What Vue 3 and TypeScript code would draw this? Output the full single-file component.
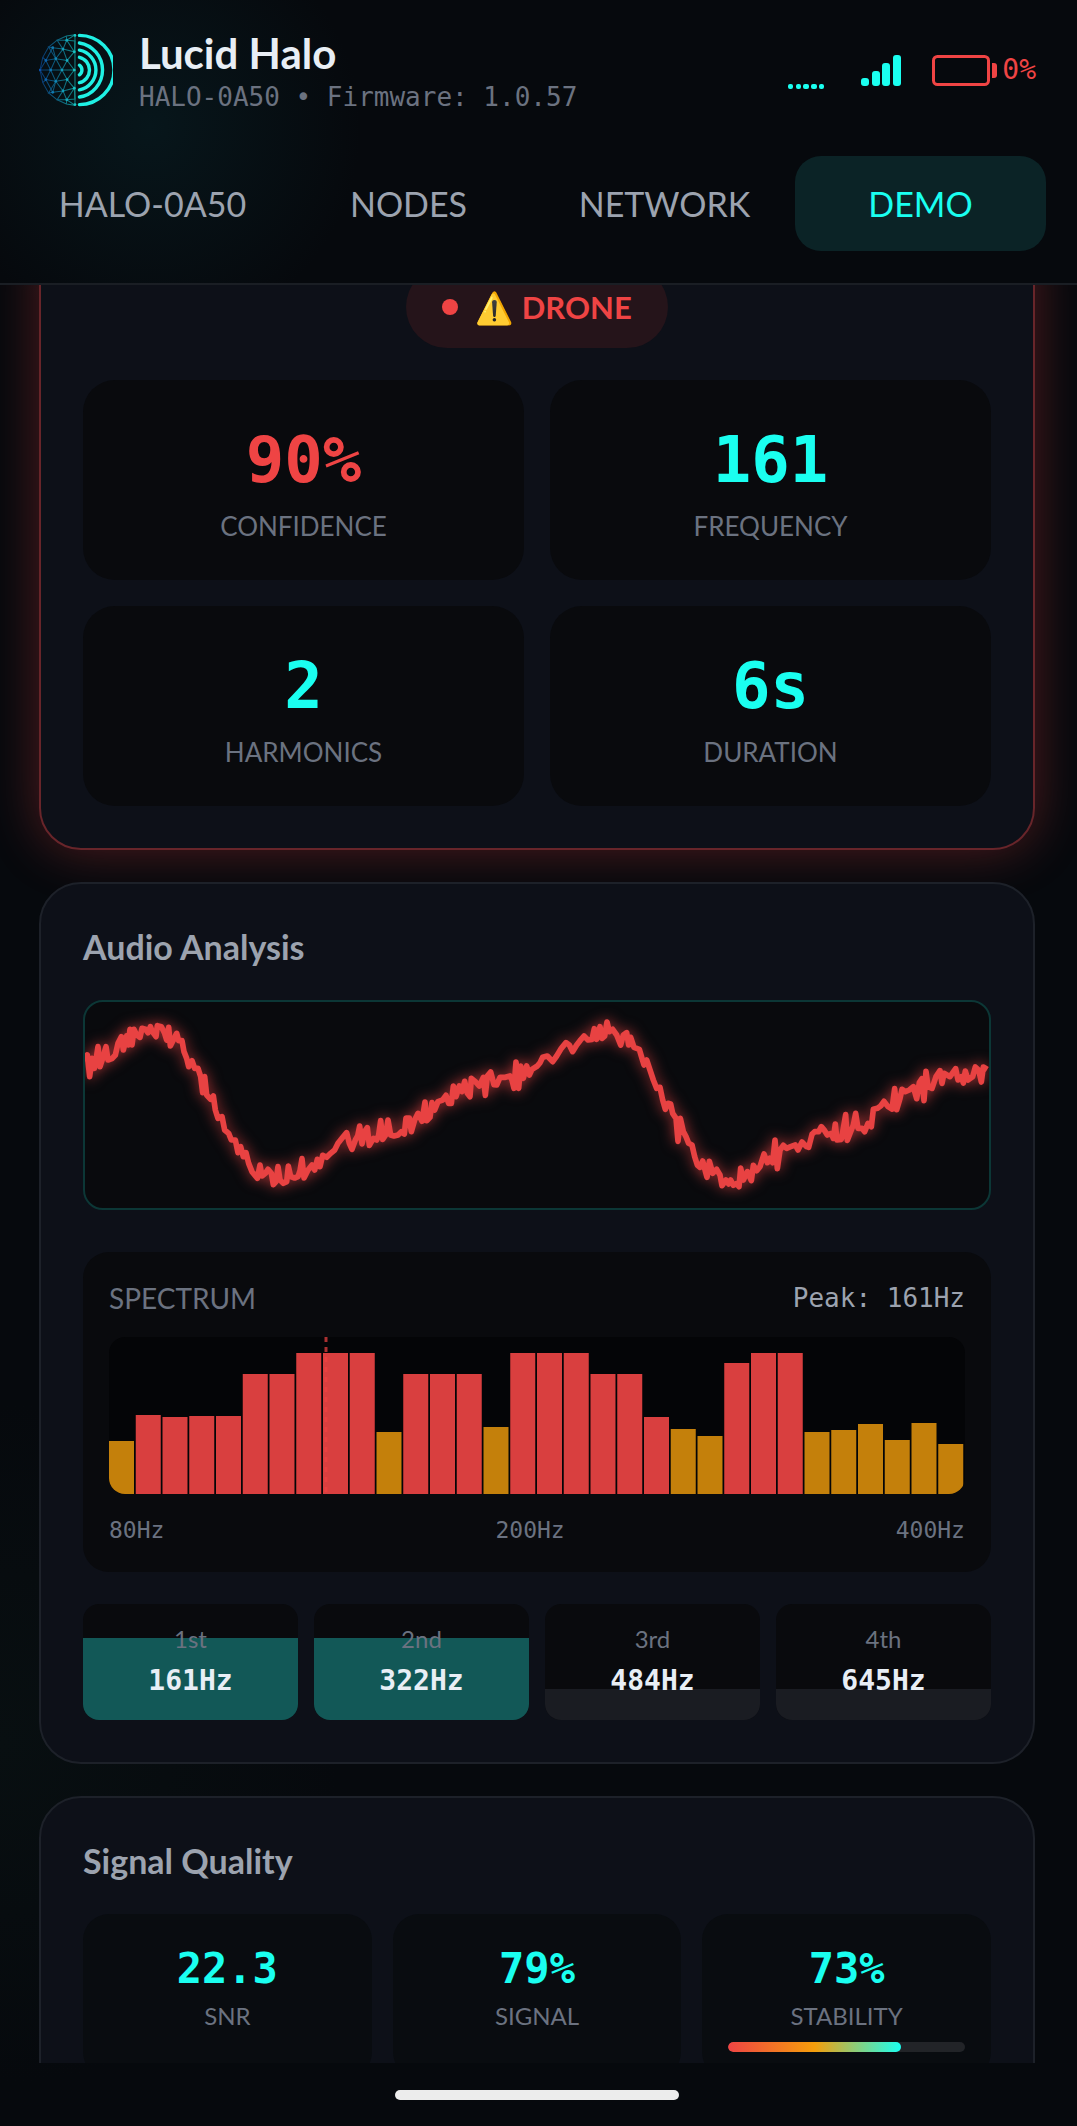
<script setup lang="ts">
interface Stat {
  value: string
  label: string
  alert?: boolean
  level?: number
}

interface Harmonic {
  order: string
  frequency: string
  level: number
  active: boolean
}

const tabs: string[] = ['HALO-0A50', 'NODES', 'NETWORK', 'DEMO']
const activeTab = 'DEMO'

const detection: Stat[] = [
  { value: '90%', label: 'CONFIDENCE', alert: true },
  { value: '161', label: 'FREQUENCY' },
  { value: '2', label: 'HARMONICS' },
  { value: '6s', label: 'DURATION' },
]

const harmonics: Harmonic[] = [
  { order: '1st', frequency: '161Hz', level: 71, active: true },
  { order: '2nd', frequency: '322Hz', level: 71, active: true },
  { order: '3rd', frequency: '484Hz', level: 27, active: false },
  { order: '4th', frequency: '645Hz', level: 27, active: false },
]

const quality: Stat[] = [
  { value: '22.3', label: 'SNR' },
  { value: '79%', label: 'SIGNAL' },
  { value: '73%', label: 'STABILITY', level: 73 },
]

// Spectrum magnitudes, one per band between 80 and 400 Hz, out of 157
const bands: number[] = [
  53, 79, 77, 78, 78, 120, 120, 141, 141, 141, 62, 120, 120, 120, 67, 141,
  141, 141, 120, 120, 77, 65, 58, 131, 141, 141, 62, 64, 70, 54, 71, 50,
]
const bandPitch = 26.75
const bandColor = (magnitude: number): string => (magnitude > 75 ? '#d93f3f' : '#c4800b')

// Waveform samples as x,y pairs; the second sweep continues where the first ends
const sweepOffset = 1440
const firstSweep: number[] = [
  75, 245, 82, 225, 89, 290, 96, 235, 103, 265, 108, 240, 114, 200, 120, 260, 128, 235, 138, 200,
  144, 240, 156, 236, 166, 225, 174, 190, 184, 170, 190, 210, 200, 168, 205, 195, 210, 148, 216, 195,
  222, 148, 230, 165, 240, 172, 246, 145, 256, 148, 264, 158, 271, 140, 277, 155, 288, 170, 292, 137,
  304, 140, 314, 160, 320, 180, 326, 142, 331, 198, 340, 180, 350, 160, 356, 182, 366, 182, 372, 215,
  380, 235, 386, 260, 396, 242, 404, 265, 414, 265, 422, 290, 428, 338, 434, 290, 440, 345, 452, 358,
  460, 348, 466, 390, 474, 415, 486, 410, 494, 450, 506, 460, 514, 480, 526, 480, 534, 518, 542, 500,
  550, 530, 558, 518, 566, 550, 576, 575, 592, 595, 600, 555, 606, 588, 616, 580, 624, 568, 634, 580,
  640, 614, 648, 605, 654, 560, 660, 600, 670, 610, 680, 605, 685, 558, 692, 590, 704, 594, 714, 590,
  720, 572, 726, 536, 732, 594, 744, 570, 756, 555, 764, 570, 772, 538, 780, 560, 788, 526, 800, 532,
  812, 520, 824, 510, 834, 490, 846, 475, 860, 458, 868, 490, 876, 508, 886, 480, 893, 468, 899, 438,
  906, 492, 914, 455, 922, 443, 928, 496, 940, 475, 950, 480, 956, 465, 962, 422, 968, 478, 977, 465,
  984, 420, 992, 465, 1002, 468, 1014, 465, 1024, 455, 1033, 462, 1038, 414, 1048, 414, 1054, 455,
  1064, 420, 1074, 400, 1086, 424, 1095, 366, 1100, 422, 1110, 412, 1116, 368, 1124, 390, 1134, 365,
  1148, 360, 1158, 346, 1166, 370, 1174, 370, 1180, 318, 1188, 350, 1198, 318, 1206, 335, 1214, 304,
  1222, 340, 1230, 350, 1234, 295, 1246, 305, 1258, 318, 1270, 292, 1276, 346, 1282, 288, 1292, 276,
  1302, 314, 1310, 315, 1320, 292, 1336, 292, 1350, 288, 1356, 300, 1362, 325, 1368, 246, 1376, 325,
  1382, 258, 1390, 295, 1400, 258, 1408, 285, 1416, 268, 1432, 258,
]
const secondSweep: number[] = [
  0, 248, 8, 232, 22, 228, 38, 245, 50, 228, 64, 205, 78, 188, 88, 195, 98, 215, 110, 195, 120, 182,
  132, 168, 144, 180, 156, 178, 163, 146, 170, 178, 180, 140, 186, 175, 194, 168, 201, 126, 208, 155,
  218, 148, 230, 165, 242, 195, 250, 165, 260, 158, 266, 195, 272, 172, 282, 202, 298, 208, 306, 235,
  312, 255, 320, 240, 330, 270, 340, 300, 350, 325, 360, 322, 368, 360, 376, 388, 384, 370, 392, 372,
  398, 400, 408, 415, 414, 484, 421, 415, 430, 455, 438, 470, 446, 490, 456, 495, 464, 530, 472, 555,
  480, 562, 488, 543, 501, 592, 508, 544, 518, 580, 530, 568, 540, 585, 546, 617, 558, 600, 566, 612,
  572, 600, 580, 616, 590, 610, 597, 620, 602, 564, 610, 600, 622, 575, 634, 602, 640, 556, 650, 572,
  660, 560, 672, 522, 682, 548, 690, 535, 698, 548, 705, 480, 712, 566, 720, 510, 730, 496, 740, 505,
  752, 500, 766, 495, 774, 510, 786, 486, 800, 500, 806, 502, 816, 463, 824, 455, 836, 455, 844, 440,
  854, 452, 862, 465, 874, 460, 880, 475, 886, 432, 891, 480, 904, 478, 910, 445, 917, 404, 922, 481,
  934, 450, 940, 435, 947, 400, 954, 445, 966, 445, 974, 455, 984, 430, 994, 440, 1000, 388, 1012, 385,
  1022, 378, 1032, 364, 1044, 380, 1056, 387, 1064, 326, 1070, 389, 1080, 355, 1086, 328, 1096, 335,
  1108, 330, 1120, 320, 1130, 356, 1138, 308, 1146, 296, 1152, 362, 1158, 274, 1164, 320, 1176, 325,
  1188, 290, 1200, 272, 1206, 310, 1212, 280, 1230, 290, 1247, 266, 1254, 300, 1264, 290, 1270, 309,
  1276, 273, 1284, 300, 1298, 290, 1306, 261, 1316, 270, 1324, 306, 1330, 261, 1342, 268,
]
const waveform: string = [
  ...firstSweep,
  ...secondSweep.map((n, i) => (i % 2 === 0 ? n + sweepOffset : n)),
].join(' ')

const meshLines: string[] = [
  '102,2 77,6 50,18 25,38 8,68 0,105 8,142 25,172 50,192 77,204 102,208 102,2',
  '102,2 78,18 50,18 67,44 78,18 100,52 67,44 37,40 25,38 46,72 67,44 79,77 100,52',
  '77,6 78,18 102,20 100,52',
  '37,40 17,77 46,72 79,77 100,105 64,105 79,77',
  '8,68 17,77 0,105 31,105 17,77',
  '37,40 46,72 31,105 64,105 46,72',
  '102,208 78,192 50,192 67,166 78,192 100,158 67,166 37,170 25,172 46,138 67,166 79,133 100,158',
  '77,204 78,192 102,190 100,158',
  '37,170 17,133 46,138 79,133 100,105',
  '8,142 17,133 0,105',
  '31,105 17,133',
  '37,170 46,138 31,105',
  '64,105 46,138',
  '64,105 79,133',
]
const meshNodes: [number, number][] = [
  [102, 4], [78, 18], [67, 44], [37, 40], [100, 52], [46, 72], [79, 77], [17, 77], [31, 105],
  [64, 105], [100, 105], [0, 105], [79, 133], [46, 138], [17, 133], [100, 158], [67, 166],
  [37, 170], [78, 192], [102, 206],
]
const ringRadii: number[] = [101, 80, 59, 38, 17]
const ringPath = (r: number): string => {
  const rise = Math.round(Math.sqrt(r * r - 100))
  return `M115 ${105 - rise}A${r} ${r} 0 0 1 115 ${105 + rise}`
}
</script>

<template>
  <div class="app">
    <header class="header">
      <div class="brand-row">
        <svg class="logo" viewBox="-3 -3 216 216" aria-hidden="true">
          <defs>
            <linearGradient id="mesh" gradientUnits="userSpaceOnUse" x1="0" y1="0" x2="104" y2="0">
              <stop offset="0" stop-color="#0b4fa8" />
              <stop offset="1" stop-color="#17c9c4" />
            </linearGradient>
          </defs>
          <g fill="none" stroke="url(#mesh)" stroke-width="3" opacity="0.65">
            <polyline v-for="(line, i) in meshLines" :key="i" :points="line" />
          </g>
          <circle v-for="([x, y], i) in meshNodes" :key="i" :cx="x" :cy="y" r="4" fill="url(#mesh)" />
          <path
            v-for="r in ringRadii"
            :key="r"
            :d="ringPath(r)"
            fill="none"
            stroke="#1ff0e4"
            stroke-width="10"
            stroke-linecap="round"
          />
        </svg>
        <div class="brand">
          <h1>Lucid Halo</h1>
          <p class="mono">HALO-0A50 • Firmware: 1.0.57</p>
        </div>
        <div class="status">
          <svg class="activity" width="36" height="38" viewBox="0 0 36 38" fill="#1afff0" aria-label="Activity">
            <rect x="0" y="33" width="5" height="5" rx="2" />
            <rect x="8" y="33" width="5" height="5" rx="2" />
            <rect x="15" y="33" width="6" height="5" rx="2" />
            <rect x="23" y="33" width="6" height="5" rx="2" />
            <rect x="31" y="33" width="5" height="5" rx="2" />
          </svg>
          <svg width="40" height="31" viewBox="0 0 40 31" fill="#1afff0" aria-label="Signal strength">
            <rect x="0" y="23" width="8" height="8" rx="3" />
            <rect x="11" y="16" width="8" height="15" rx="3" />
            <rect x="21" y="8" width="8" height="23" rx="3" />
            <rect x="32" y="0" width="8" height="31" rx="3" />
          </svg>
          <div class="battery">
            <svg width="65" height="31" viewBox="0 0 65 31" aria-hidden="true">
              <rect x="1.5" y="1.5" width="55" height="28" rx="4" fill="none" stroke="#ef4444" stroke-width="3" />
              <path d="M60 8h2a3 3 0 0 1 3 3v9a3 3 0 0 1-3 3h-2z" fill="#ef4444" />
            </svg>
            <span class="mono">0%</span>
          </div>
        </div>
      </div>
      <nav class="tabs">
        <button v-for="tab in tabs" :key="tab" type="button" :class="{ active: tab === activeTab }">
          {{ tab }}
        </button>
      </nav>
    </header>

    <main class="content">
      <section class="card alert-card">
        <div class="badge">
          <span class="dot"></span>
          <span class="badge-text"><span class="emoji">⚠️</span> DRONE</span>
        </div>
        <div class="detection">
          <div v-for="stat in detection" :key="stat.label" class="tile">
            <div class="tile-value mono" :class="{ alert: stat.alert }">{{ stat.value }}</div>
            <div class="tile-label">{{ stat.label }}</div>
          </div>
        </div>
      </section>

      <section class="card">
        <h2>Audio Analysis</h2>
        <div class="wave">
          <svg viewBox="75 66 2712 618" preserveAspectRatio="none" role="img" aria-label="Waveform">
            <polyline
              :points="waveform"
              fill="none"
              stroke="#e84242"
              stroke-width="17"
              stroke-linejoin="round"
            />
          </svg>
        </div>
        <div class="spectrum">
          <div class="spectrum-head">
            <span class="spectrum-title">SPECTRUM</span>
            <span class="peak mono">Peak: 161Hz</span>
          </div>
          <svg class="bands" viewBox="0 0 856 157" preserveAspectRatio="none" role="img" aria-label="Spectrum">
            <rect
              v-for="(magnitude, i) in bands"
              :key="i"
              :x="i * bandPitch"
              :y="157 - magnitude"
              width="25"
              :height="magnitude"
              :fill="bandColor(magnitude)"
            />
            <line x1="217" y1="0" x2="217" y2="157" stroke="#ef4444" stroke-width="3" stroke-dasharray="5 5" opacity="0.7" />
          </svg>
          <div class="axis mono">
            <span>80Hz</span>
            <span>200Hz</span>
            <span>400Hz</span>
          </div>
        </div>
        <div class="harmonics">
          <div v-for="h in harmonics" :key="h.order" class="harmonic">
            <div class="fill" :class="{ active: h.active }" :style="{ height: h.level + '%' }"></div>
            <div class="order">{{ h.order }}</div>
            <div class="freq mono">{{ h.frequency }}</div>
          </div>
        </div>
      </section>

      <section class="card">
        <h2>Signal Quality</h2>
        <div class="quality">
          <div v-for="q in quality" :key="q.label" class="metric">
            <div class="metric-value mono">{{ q.value }}</div>
            <div class="metric-label">{{ q.label }}</div>
            <div v-if="q.level" class="meter">
              <div class="meter-fill" :style="{ width: q.level + '%' }"></div>
            </div>
          </div>
        </div>
      </section>
    </main>

    <footer class="home-bar">
      <div class="home-indicator"></div>
    </footer>
  </div>
</template>

<style>
body {
  margin: 0;
  background: #06090d;
}
</style>

<style scoped>
.app {
  display: flex;
  flex-direction: column;
  height: 100vh;
  background:
    radial-gradient(circle at 14% 6%, #07161b, transparent 210px),
    radial-gradient(circle at 0% 82%, #080f11, transparent 340px),
    #06090d;
  color: #e8eef5;
  font-family: Lato, sans-serif;
}

.app * {
  box-sizing: border-box;
}

.mono {
  font-family: 'DejaVu Sans Mono', monospace;
}

h1,
h2,
p {
  margin: 0;
}

.header {
  flex: none;
  padding-top: 26px;
  border-bottom: 2px solid #1a1e24;
}

.brand-row {
  display: flex;
  align-items: center;
  padding: 0 41px 0 39px;
}

.logo {
  flex: none;
  width: 74px;
  height: 74px;
}

.brand {
  flex: 1;
  margin-left: 26px;
}

.brand h1 {
  font-size: 42px;
  line-height: 54px;
  font-weight: 700;
}

.brand p {
  color: #6b7280;
  font-size: 26px;
  line-height: 34px;
  white-space: nowrap;
}

.status {
  display: flex;
  align-items: center;
}

.status svg {
  flex: none;
  display: block;
}

.activity {
  margin-right: 37px;
}

.battery {
  display: flex;
  align-items: center;
  gap: 5px;
  margin-left: 31px;
  color: #ef4444;
  font-size: 28px;
  line-height: 32px;
}

.tabs {
  display: grid;
  grid-template-columns: repeat(4, 1fr);
  gap: 5px;
  padding: 42px 31px 32px 27px;
}

.tabs button {
  height: 95px;
  padding: 0;
  border: 0;
  border-radius: 26px;
  background: transparent;
  color: #9ca3af;
  font: 400 34px/40px Lato, sans-serif;
}

.tabs button.active {
  background: #0b2326;
  color: #1afff0;
}

.content {
  flex: 1;
  min-height: 0;
  display: flex;
  flex-direction: column;
  gap: 32px;
  padding: 0 42px 0 39px;
  overflow: hidden;
}

.card {
  flex: none;
  padding: 42px;
  border: 2px solid #1d2129;
  border-radius: 42px;
  background: #0d1018;
}

/* The alert card is scrolled partly under the header */
.alert-card {
  margin-top: -63px;
  border-color: #68252a;
  box-shadow: 0 0 52px rgba(239, 68, 68, 0.32);
}

.badge {
  display: flex;
  align-items: center;
  gap: 17px;
  width: fit-content;
  height: 82px;
  margin: 0 auto 32px;
  padding: 0 36px;
  border-radius: 41px;
  background: #25141a;
  color: #ef4444;
}

.dot {
  width: 16px;
  height: 16px;
  border-radius: 50%;
  background: #ef4444;
}

.badge-text {
  font-size: 31px;
  line-height: 40px;
  font-weight: 700;
}

.detection {
  display: grid;
  grid-template-columns: 1fr 1fr;
  gap: 26px;
}

.tile {
  padding: 40px 0 36px;
  border-radius: 32px;
  background: #090a0d;
  text-align: center;
}

.tile-value {
  color: #1afff0;
  font-size: 64px;
  line-height: 80px;
  font-weight: 700;
}

.tile-value.alert {
  color: #ef4444;
}

.tile-label {
  margin-top: 8px;
  color: #6b7280;
  font-size: 26px;
  line-height: 36px;
}

h2 {
  margin-bottom: 32px;
  color: #9ca3af;
  font-size: 34px;
  line-height: 42px;
  font-weight: 700;
}

.wave {
  height: 210px;
  border: 2px solid #0c3736;
  border-radius: 20px;
  background: #090a0d;
  overflow: hidden;
}

.wave svg {
  display: block;
  width: 100%;
  height: 100%;
  filter: drop-shadow(0 0 7px rgba(239, 68, 68, 0.7));
}

.spectrum {
  margin-top: 42px;
  padding: 26px;
  border-radius: 26px;
  background: #090a0d;
}

.spectrum-head {
  display: flex;
  justify-content: space-between;
  line-height: 40px;
}

.spectrum-title {
  color: #6b7280;
  font-size: 28px;
}

.peak {
  color: #9ca3af;
  font-size: 26px;
}

.bands {
  display: block;
  width: 100%;
  height: 157px;
  margin-top: 19px;
  border-radius: 16px;
  background: #040507;
}

.axis {
  display: flex;
  justify-content: space-between;
  margin-top: 20px;
  color: #6b7280;
  font-size: 23px;
  line-height: 32px;
}

.harmonics {
  display: grid;
  grid-template-columns: repeat(4, 1fr);
  gap: 16px;
  margin-top: 32px;
}

.harmonic {
  position: relative;
  padding: 20px 0 18px;
  border-radius: 16px;
  background: #090a0d;
  text-align: center;
  overflow: hidden;
}

.fill {
  position: absolute;
  left: 0;
  right: 0;
  bottom: 0;
  background: #1a1c22;
}

.fill.active {
  background: #125857;
}

.order,
.freq {
  position: relative;
}

.order {
  color: #6b7280;
  font-size: 24px;
  line-height: 30px;
}

.freq {
  margin-top: 6px;
  font-size: 28px;
  line-height: 42px;
  font-weight: 700;
}

.quality {
  display: grid;
  grid-template-columns: repeat(3, 1fr);
  gap: 21px;
}

.metric {
  padding: 26px;
  border-radius: 26px;
  background: #090c10;
  text-align: center;
}

.metric-value {
  color: #1afff0;
  font-size: 42px;
  line-height: 58px;
  font-weight: 700;
}

.metric-label {
  color: #6b7280;
  font-size: 24px;
  line-height: 36px;
}

.meter {
  height: 10px;
  margin-top: 8px;
  border-radius: 5px;
  background: #222428;
  overflow: hidden;
}

.meter-fill {
  height: 100%;
  border-radius: 5px;
  background: linear-gradient(90deg, #ef4444, #f59e0b 50%, #1afff0);
}

.home-bar {
  flex: none;
  display: flex;
  justify-content: center;
  height: 63px;
  padding: 27px 42px 0 39px;
}

.home-indicator {
  width: 284px;
  height: 10px;
  border-radius: 5px;
  background: #ececec;
}
</style>
